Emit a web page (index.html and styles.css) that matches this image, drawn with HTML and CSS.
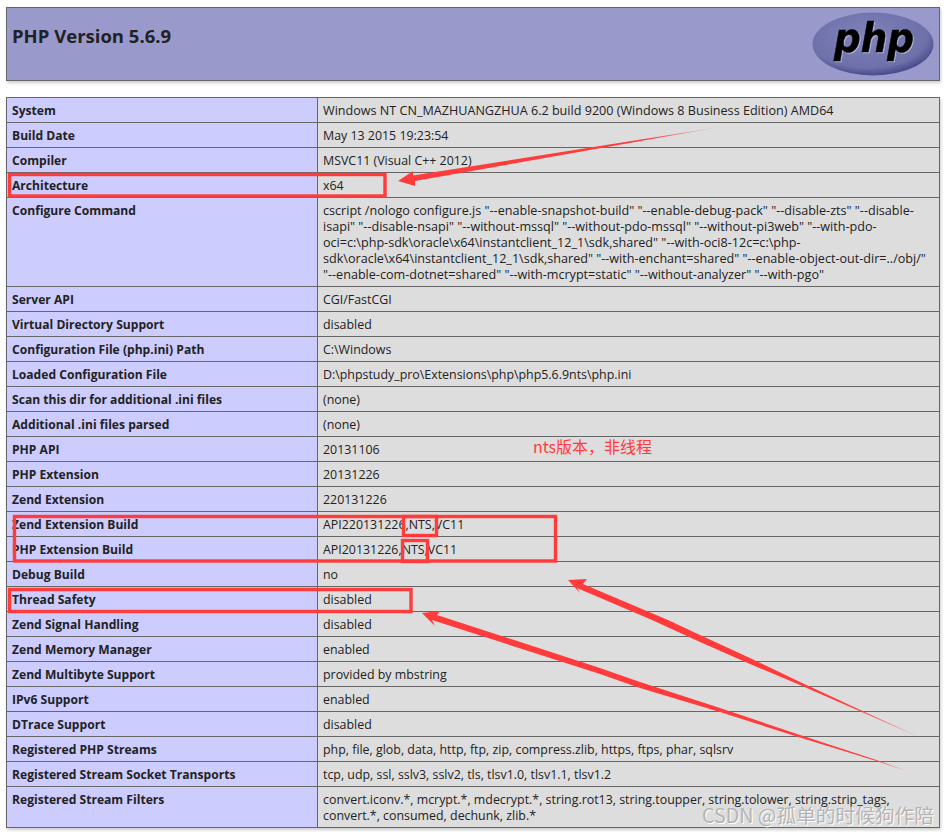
FILE: index.html
```html
<!DOCTYPE html>
<html lang="zh-CN">
<head>
<meta charset="utf-8">
<title>phpinfo()</title>
<link rel="stylesheet" href="styles.css">
</head>
<body>
<div class="page">
  <header class="head">
    <h1 class="title">PHP Version 5.6.9</h1>
    <svg class="logo" viewBox="0 0 122 64" width="122" height="64" aria-label="PHP logo">
      <defs>
        <radialGradient id="oval" cx="45%" cy="38%" r="62%">
          <stop offset="0" stop-color="#8285bb"/>
          <stop offset="0.8" stop-color="#6d70a9"/>
          <stop offset="1" stop-color="#484b8a"/>
        </radialGradient>
      </defs>
      <ellipse cx="61" cy="32" rx="60.5" ry="31.5" fill="url(#oval)"/>
      <text class="logo-text" x="62" y="40" text-anchor="middle" textLength="80" lengthAdjust="spacingAndGlyphs">php</text>
    </svg>
  </header>
  <table class="info">
    <colgroup><col class="col-e"><col></colgroup>
    <tbody>
      <tr><td class="e">System</td><td class="v wide">Windows NT CN_MAZHUANGZHUA 6.2 build 9200 (Windows 8 Business Edition) AMD64</td></tr>
      <tr><td class="e">Build Date</td><td class="v">May 13 2015 19:23:54</td></tr>
      <tr><td class="e">Compiler</td><td class="v">MSVC11 (Visual C++ 2012)</td></tr>
      <tr><td class="e">Architecture</td><td class="v">x64</td></tr>
      <tr><td class="e">Configure Command</td><td class="v wide">cscript /nologo configure.js "--enable-snapshot-build" "--enable-debug-pack" "--disable-zts" "--disable-isapi" "--disable-nsapi" "--without-mssql" "--without-pdo-mssql" "--without-pi3web" "--with-pdo-oci=c:\php-sdk\oracle\x64\instantclient_12_1\sdk,shared" "--with-oci8-12c=c:\php-sdk\oracle\x64\instantclient_12_1\sdk,shared" "--with-enchant=shared" "--enable-object-out-dir=../obj/" "--enable-com-dotnet=shared" "--with-mcrypt=static" "--without-analyzer" "--with-pgo"</td></tr>
      <tr><td class="e">Server API</td><td class="v">CGI/FastCGI</td></tr>
      <tr><td class="e">Virtual Directory Support</td><td class="v">disabled</td></tr>
      <tr><td class="e">Configuration File (php.ini) Path</td><td class="v">C:\Windows</td></tr>
      <tr><td class="e">Loaded Configuration File</td><td class="v">D:\phpstudy_pro\Extensions\php\php5.6.9nts\php.ini</td></tr>
      <tr><td class="e">Scan this dir for additional .ini files</td><td class="v">(none)</td></tr>
      <tr><td class="e">Additional .ini files parsed</td><td class="v">(none)</td></tr>
      <tr><td class="e">PHP API</td><td class="v">20131106</td></tr>
      <tr><td class="e">PHP Extension</td><td class="v">20131226</td></tr>
      <tr><td class="e">Zend Extension</td><td class="v">220131226</td></tr>
      <tr><td class="e">Zend Extension Build</td><td class="v">API220131226,NTS,VC11</td></tr>
      <tr><td class="e">PHP Extension Build</td><td class="v">API20131226,NTS,VC11</td></tr>
      <tr><td class="e">Debug Build</td><td class="v">no</td></tr>
      <tr><td class="e">Thread Safety</td><td class="v">disabled</td></tr>
      <tr><td class="e">Zend Signal Handling</td><td class="v">disabled</td></tr>
      <tr><td class="e">Zend Memory Manager</td><td class="v">enabled</td></tr>
      <tr><td class="e">Zend Multibyte Support</td><td class="v">provided by mbstring</td></tr>
      <tr><td class="e">IPv6 Support</td><td class="v">enabled</td></tr>
      <tr><td class="e">DTrace Support</td><td class="v">disabled</td></tr>
      <tr><td class="e">Registered PHP Streams</td><td class="v">php, file, glob, data, http, ftp, zip, compress.zlib, https, ftps, phar, sqlsrv</td></tr>
      <tr><td class="e">Registered Stream Socket Transports</td><td class="v">tcp, udp, ssl, sslv3, sslv2, tls, tlsv1.0, tlsv1.1, tlsv1.2</td></tr>
      <tr><td class="e">Registered Stream Filters</td><td class="v">convert.iconv.*, mcrypt.*, mdecrypt.*, string.rot13, string.toupper, string.tolower, string.strip_tags, convert.*, consumed, dechunk, zlib.*</td></tr>
    </tbody>
  </table>
  <svg class="marks" viewBox="0 0 949 835" width="949" height="835" aria-hidden="true">
    <defs>
      <linearGradient id="fade1" gradientUnits="userSpaceOnUse" x1="400" y1="180" x2="720" y2="127">
        <stop offset="0.75" stop-color="#ff3b3b"/>
        <stop offset="1" stop-color="#ff3b3b" stop-opacity="0.25"/>
      </linearGradient>
      <linearGradient id="fade2" gradientUnits="userSpaceOnUse" x1="800" y1="680" x2="919" y2="737">
        <stop offset="0.3" stop-color="#ff3b3b"/>
        <stop offset="1" stop-color="#ff3b3b" stop-opacity="0.5"/>
      </linearGradient>
      <linearGradient id="fade3" gradientUnits="userSpaceOnUse" x1="800" y1="735" x2="908" y2="772">
        <stop offset="0.6" stop-color="#ff3b3b"/>
        <stop offset="1" stop-color="#ff3b3b" stop-opacity="0.5"/>
      </linearGradient>
    </defs>
    <g class="box">
      <rect x="9.5" y="174.5" width="375.5" height="21.5"/>
      <rect x="14.5" y="516.5" width="541" height="44.5"/>
      <rect x="403.5" y="516.5" width="33" height="19"/>
      <rect x="402.5" y="540.5" width="25" height="21"/>
      <rect x="9.5" y="589.5" width="401.5" height="22"/>
    </g>
    <polygon fill="url(#fade1)" points="398,181 413,171 413,175.5 720,127 415,181 415,186"/>
    <polygon fill="url(#fade2)" points="568,580 587,579 583,584 668,620 700,635 750,658 800,682 880,719 919,737 880,720 800,685 750,664 700,642 652,620 577,588 580,593"/>
    <polygon fill="url(#fade3)" points="422,613 440,611 437,615 600,668 640,682 720,708 800,735 878,760.5 908,771.5 878,761.5 800,737.5 720,712 640,688 600,674 432,620 435,626"/>
  </svg>
  <span class="note">nts版本，非线程</span>
  <span class="watermark">CSDN @孤单的时候狗作陪</span>
</div>
</body>
</html>
```

FILE: styles.css
```css
html, body {
  margin: 0;
  padding: 0;
  background: #fff;
}

.page {
  position: relative;
  width: 949px;
  height: 835px;
  overflow: hidden;
  box-sizing: border-box;
  padding: 7px 9px 0 6px;
  font-family: "Open Sans", "Noto Sans CJK SC", sans-serif;
  font-size: 12.4px;
  line-height: 16px;
  color: #222;
}

.head {
  display: flex;
  justify-content: space-between;
  align-items: flex-start;
  box-sizing: border-box;
  height: 74px;
  padding: 4px 5px 0 5px;
  background: #99c;
  border: 1px solid #666;
  box-shadow: 1px 2px 3px #ccc;
}

.title {
  margin: 14px 0 0;
  font-size: 18.5px;
  line-height: 20px;
  font-weight: 700;
}

.logo {
  display: block;
  flex: none;
}

.logo-text {
  font-family: "DejaVu Sans", sans-serif;
  font-size: 41px;
  font-style: italic;
  font-weight: 700;
  fill: #000;
  stroke: #000;
  stroke-width: 0.5px;
  filter: drop-shadow(1px 1px 0 rgba(255, 255, 255, 0.45));
}

.info {
  width: 934px;
  margin-top: 16px;
  border-collapse: collapse;
  table-layout: fixed;
  box-shadow: 1px 2px 3px #ccc;
}

.col-e {
  width: 311px;
}

.info td {
  padding: 5px 5px 3px;
  border: 1px solid #666;
  vertical-align: baseline;
}

.e {
  background: #ccf;
  font-size: 12.1px;
  font-weight: 700;
}

.v {
  background: #ddd;
  overflow-wrap: break-word;
}

.info .wide {
  font-size: 12.6px;
}

.marks {
  position: absolute;
  left: 0;
  top: 0;
  pointer-events: none;
}

.box rect {
  fill: none;
  stroke: #ff3b3b;
  stroke-width: 3.4;
}

.note {
  position: absolute;
  left: 533px;
  top: 436px;
  font-family: "Noto Sans CJK SC", sans-serif;
  font-size: 16px;
  line-height: 20px;
  color: #ff3b3b;
}

.watermark {
  position: absolute;
  right: 15px;
  top: 803px;
  font-family: "Noto Sans CJK SC", sans-serif;
  font-size: 19.7px;
  line-height: 24px;
  color: #b4b4b4;
  text-shadow: 1px 1px 0 #fff;
}
```
